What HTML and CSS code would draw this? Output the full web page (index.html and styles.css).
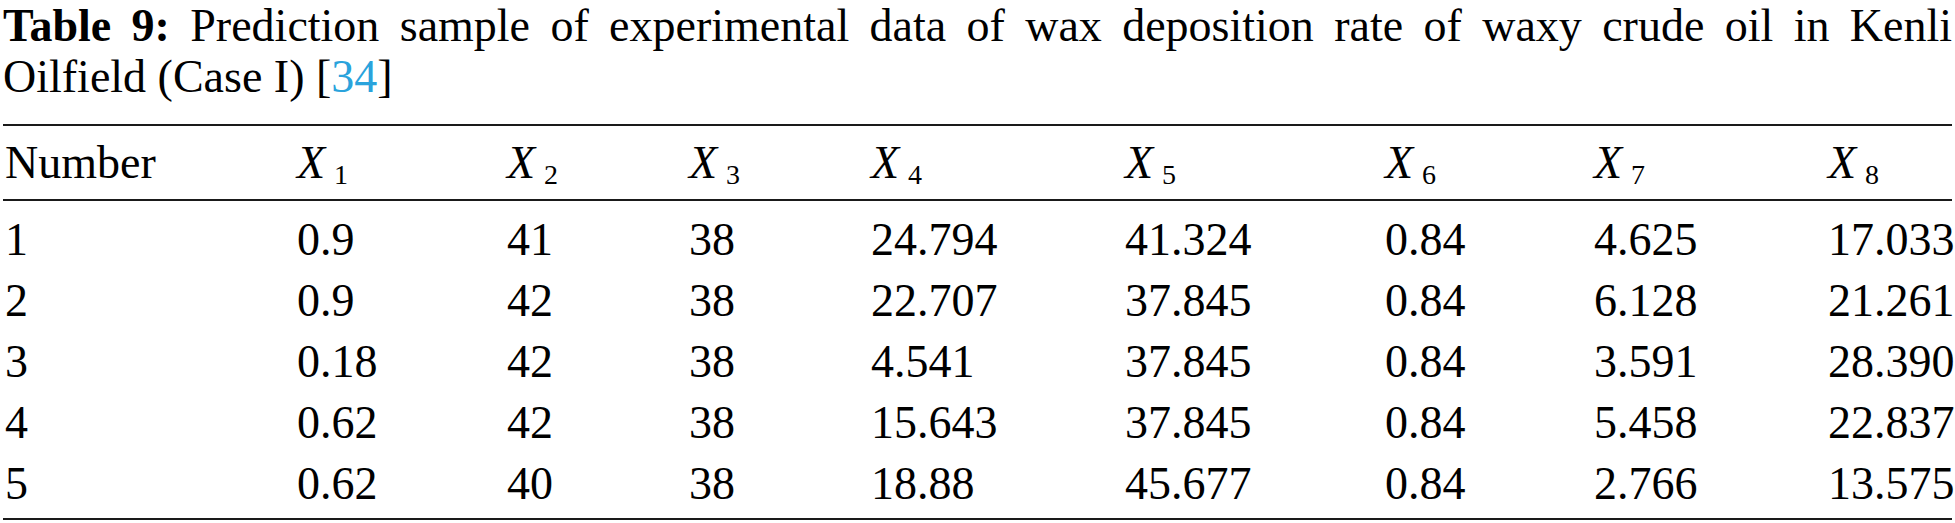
FILE: index.html
```html
<!DOCTYPE html>
<html lang="en">
<head>
    <meta charset="UTF-8">
    <meta name="viewport" content="width=device-width, initial-scale=1.0">
    <title>Table 9</title>
    <link rel="stylesheet" href="styles.css">
</head>
<body>

<div class="table-wrap">
    <!-- Caption -->
    <div class="caption">
        <span class="caption-label">Table 9:</span> Prediction sample of experimental data of wax deposition rate of waxy crude oil in Kenli Oilfield (Case I) [<a href="#ref-34" class="ref-link">34</a>]
    </div>

    <table class="data-table">
        <colgroup>
            <col class="c-num">
            <col class="c-x1">
            <col class="c-x2">
            <col class="c-x3">
            <col class="c-x4">
            <col class="c-x5">
            <col class="c-x6">
            <col class="c-x7">
            <col class="c-x8">
        </colgroup>
        <thead>
            <tr>
                <th>Number</th>
                <th><i>X</i><sub>1</sub></th>
                <th><i>X</i><sub>2</sub></th>
                <th><i>X</i><sub>3</sub></th>
                <th><i>X</i><sub>4</sub></th>
                <th><i>X</i><sub>5</sub></th>
                <th><i>X</i><sub>6</sub></th>
                <th><i>X</i><sub>7</sub></th>
                <th><i>X</i><sub>8</sub></th>
            </tr>
        </thead>
        <tbody>
            <tr>
                <td>1</td><td>0.9</td><td>41</td><td>38</td><td>24.794</td><td>41.324</td><td>0.84</td><td>4.625</td><td>17.033</td>
            </tr>
            <tr>
                <td>2</td><td>0.9</td><td>42</td><td>38</td><td>22.707</td><td>37.845</td><td>0.84</td><td>6.128</td><td>21.261</td>
            </tr>
            <tr>
                <td>3</td><td>0.18</td><td>42</td><td>38</td><td>4.541</td><td>37.845</td><td>0.84</td><td>3.591</td><td>28.390</td>
            </tr>
            <tr>
                <td>4</td><td>0.62</td><td>42</td><td>38</td><td>15.643</td><td>37.845</td><td>0.84</td><td>5.458</td><td>22.837</td>
            </tr>
            <tr>
                <td>5</td><td>0.62</td><td>40</td><td>38</td><td>18.88</td><td>45.677</td><td>0.84</td><td>2.766</td><td>13.575</td>
            </tr>
        </tbody>
    </table>
</div>

</body>
</html>
```

FILE: styles.css
```css
body {
    margin: 0;
    padding: 0;
    background: #fff;
    color: #000;
    font-family: "Liberation Serif", "Times New Roman", serif;
    font-size: 46px;
}

/* Wrapper */
.table-wrap {
    width: 1949px;
    padding: 0 3px;
}

/* Caption above the table */
.caption {
    margin: 0 0 22px;
    line-height: 51px;
    text-align: justify;
}

.caption-label {
    font-weight: bold;
}

.ref-link {
    color: #2aa3dc;
    text-decoration: none;
}

/* Table */
.data-table {
    width: 1949px;
    table-layout: fixed;
    border-collapse: collapse;
    border-top: 2px solid #1a1a1a;
    border-bottom: 2px solid #1a1a1a;
}

.c-num { width: 292px; }
.c-x1 { width: 210px; }
.c-x2 { width: 182px; }
.c-x3 { width: 182px; }
.c-x4 { width: 254px; }
.c-x5 { width: 260px; }
.c-x6 { width: 209px; }
.c-x7 { width: 234px; }

th, td {
    padding: 0 0 0 2px;
    text-align: left;
    font-weight: normal;
    line-height: 61px;
    white-space: nowrap;
    vertical-align: top;
}

thead th {
    padding-top: 6px;
    padding-bottom: 6px;
    border-bottom: 2px solid #1a1a1a;
}

th sub {
    font-size: 28px;
    line-height: 1;
    vertical-align: -6px;
    margin-left: 9px;
}

tbody tr:first-child td {
    padding-top: 8px;
}

tbody tr:last-child td {
    padding-bottom: 4px;
}
```
